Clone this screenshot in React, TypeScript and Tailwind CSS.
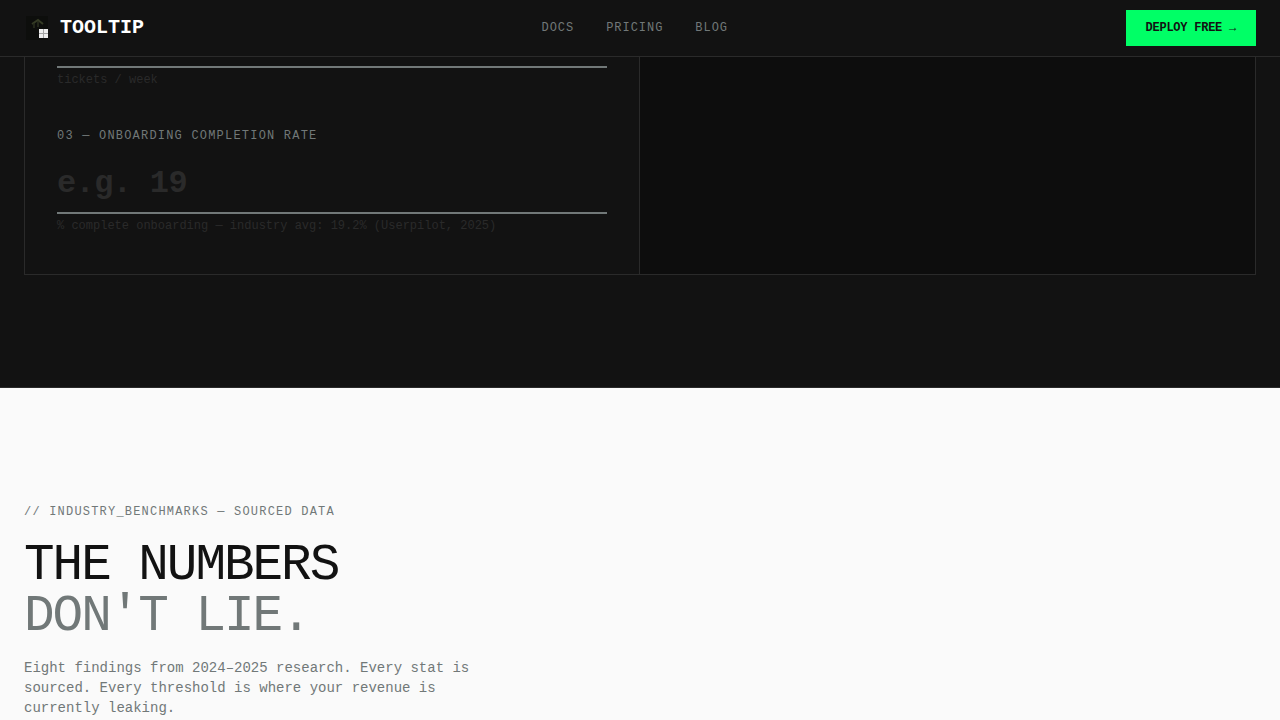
import { useState } from "react"

const NAV_LINKS = [
  { label: "DOCS", href: "#docs" },
  { label: "PRICING", href: "#pricing" },
  { label: "BLOG", href: "#blog" },
]

function Logo() {
  return (
    <svg width="24" height="24" viewBox="0 0 24 24" aria-hidden="true" className="shrink-0">
      <rect x="2" width="22" height="24" fill="#0d0e0c" />
      <path d="M8 8l6-4 5 4" fill="none" stroke="#353b25" strokeWidth="2" />
      <path d="M10 7v5M14 5v6" fill="none" stroke="#2b301f" strokeWidth="1.5" />
      <rect x="15" y="13" width="9" height="9" fill="#ededed" />
      <path d="M19.5 13v9M15 17.5h9" stroke="#a3a3a3" />
    </svg>
  )
}

function Header() {
  return (
    <header className="fixed inset-x-0 top-0 z-50 border-b border-[#2a2a2a] bg-[#121212]">
      <div className="flex h-14 items-center justify-between px-6">
        <a href="#top" className="flex items-center gap-3 text-xl leading-6 font-bold text-white">
          <Logo />
          TOOLTIP
        </a>
        <nav className="flex items-center gap-8">
          {NAV_LINKS.map(link => (
            <a
              key={link.label}
              href={link.href}
              className="text-xs tracking-[0.08em] text-[#717878] hover:text-white"
            >
              {link.label}
            </a>
          ))}
        </nav>
        <button
          type="button"
          className="h-9 bg-[#00ff66] px-5 text-xs font-bold tracking-[-0.02em] text-[#121212] hover:bg-white"
        >
          DEPLOY FREE →
        </button>
      </div>
    </header>
  )
}

interface MetricFieldProps {
  id: string
  label?: string
  name: string
  placeholder?: string
  hint: string
}

function MetricField({ id, label, name, placeholder, hint }: MetricFieldProps) {
  const [value, setValue] = useState("")

  return (
    <div>
      {label && (
        <label htmlFor={id} className="mb-4 block text-xs leading-4 tracking-widest text-[#717878]">
          {label}
        </label>
      )}
      <input
        id={id}
        type="text"
        inputMode="decimal"
        aria-label={label ? undefined : name}
        aria-describedby={`${id}-hint`}
        value={value}
        onChange={(e) => setValue(e.target.value)}
        placeholder={placeholder}
        className="block w-full border-b-2 border-[#717878] bg-transparent pt-1.5 pb-2.5 text-[32px] leading-9 font-bold tracking-[-0.02em] text-white outline-none placeholder:text-[#2a2a2a] focus:border-[#00ff66]"
      />
      <p id={`${id}-hint`} className="mt-1 text-xs leading-4 text-[#2a2a2a]">
        {hint}
      </p>
    </div>
  )
}

function Calculator() {
  return (
    <section className="border-b border-[#2a2a2a] bg-[#121212] px-6 pb-28">
      <div className="grid grid-cols-2 border-x border-b border-[#2a2a2a]">
        <div className="flex flex-col gap-10 border-r border-[#2a2a2a] px-8 pt-3.5 pb-10">
          <MetricField id="tickets" name="tickets / week" hint="tickets / week" />
          <MetricField
            id="completion"
            name="completion"
            label="03 — ONBOARDING COMPLETION RATE"
            placeholder="e.g. 19"
            hint="% complete onboarding — industry avg: 19.2% (Userpilot, 2025)"
          />
        </div>
        <div className="bg-[#0d0d0d]" />
      </div>
    </section>
  )
}

function Benchmarks() {
  return (
    <section className="px-6 pt-28">
      <p className="mb-4 text-xs leading-6 tracking-widest text-[#717878]">
        // INDUSTRY_BENCHMARKS — SOURCED DATA
      </p>
      <h2 className="mb-4 text-[51px] leading-none tracking-[-0.04em]">
        THE NUMBERS
        <br />
        <span className="text-[#717878]">DON'T LIE.</span>
      </h2>
      <p className="max-w-[480px] text-sm leading-5 text-[#717878]">
        Eight findings from 2024–2025 research. Every stat is sourced. Every threshold is where your
        revenue is currently leaking.
      </p>
    </section>
  )
}

export default function App() {
  return (
    <div
      id="top"
      className="min-h-screen bg-[#fafafa] font-['Liberation_Mono',monospace] text-[#121212]"
    >
      <Header />
      <main>
        <Calculator />
        <Benchmarks />
      </main>
    </div>
  )
}
